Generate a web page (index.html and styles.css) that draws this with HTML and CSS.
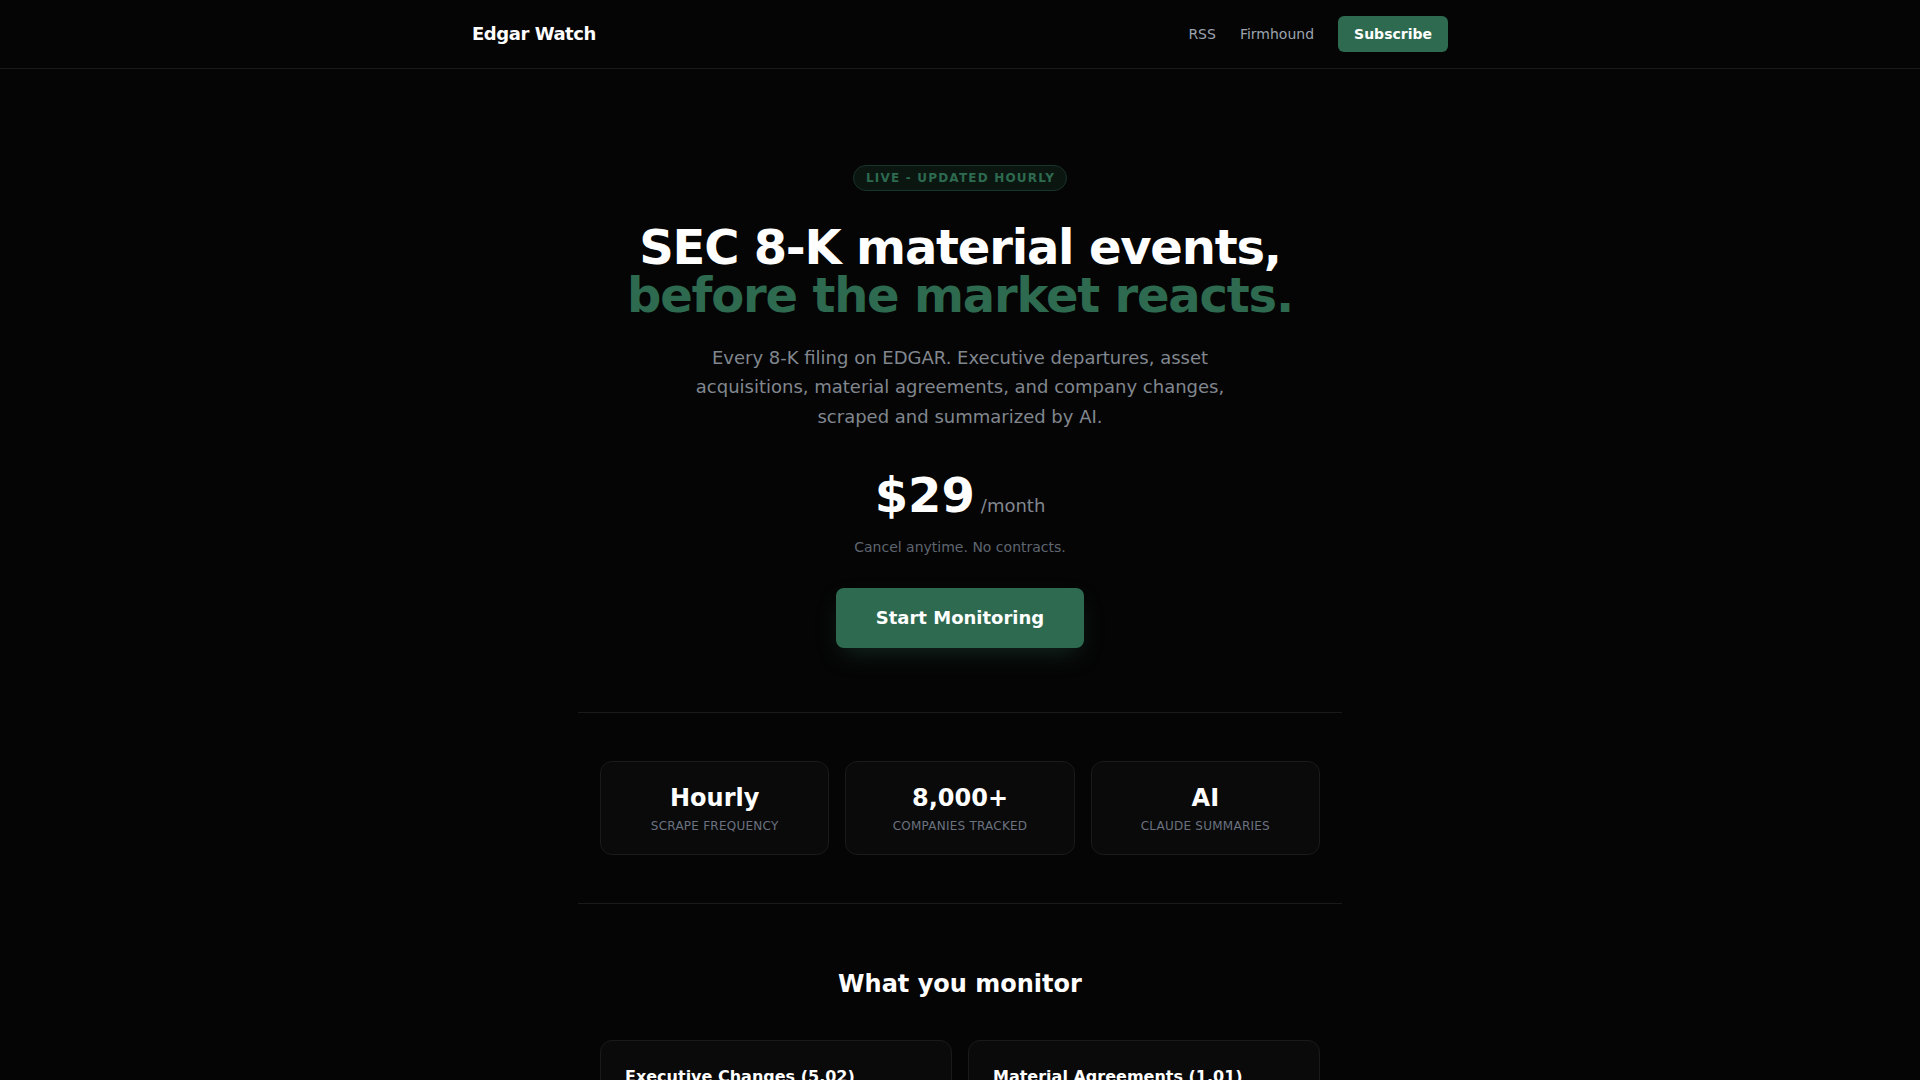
FILE: index.html
```html
<!DOCTYPE html>
<html lang="en">
<head>
<meta charset="utf-8">
<title>Edgar Watch</title>
<link rel="stylesheet" href="styles.css">
</head>
<body>
<header class="site-header">
  <div class="header-inner">
    <a class="brand" href="#">Edgar Watch</a>
    <nav class="nav">
      <a class="nav-link" href="#">RSS</a>
      <a class="nav-link" href="#">Firmhound</a>
      <a class="nav-button" href="#">Subscribe</a>
    </nav>
  </div>
</header>
<main class="container">
  <section class="hero">
    <div class="badge">LIVE - UPDATED HOURLY</div>
    <h1 class="title">SEC 8-K material events,<span class="title-accent">before the market reacts.</span></h1>
    <p class="lead">Every 8-K filing on EDGAR. Executive departures, asset acquisitions, material agreements, and company changes, scraped and summarized by AI.</p>
    <div class="price">
      <span class="price-amount">$29</span>
      <span class="price-period">/month</span>
    </div>
    <p class="price-note">Cancel anytime. No contracts.</p>
    <a class="cta" href="#">Start Monitoring</a>
  </section>
  <section class="stats">
    <div class="stat-card">
      <div class="stat-value">Hourly</div>
      <div class="stat-label">Scrape frequency</div>
    </div>
    <div class="stat-card">
      <div class="stat-value">8,000+</div>
      <div class="stat-label">Companies tracked</div>
    </div>
    <div class="stat-card">
      <div class="stat-value">AI</div>
      <div class="stat-label">Claude summaries</div>
    </div>
  </section>
  <section class="monitor">
    <h2 class="section-title">What you monitor</h2>
    <div class="monitor-grid">
      <div class="monitor-card">
        <h3 class="monitor-title">Executive Changes (5.02)</h3>
        <p class="monitor-text">CEO, CFO and director departures, appointments and compensation changes.</p>
      </div>
      <div class="monitor-card">
        <h3 class="monitor-title">Material Agreements (1.01)</h3>
        <p class="monitor-text">New contracts, credit facilities, partnerships and definitive agreements.</p>
      </div>
      <div class="monitor-card">
        <h3 class="monitor-title">Acquisitions (2.01)</h3>
        <p class="monitor-text">Completed acquisitions and dispositions of significant assets.</p>
      </div>
      <div class="monitor-card">
        <h3 class="monitor-title">Other Events (8.01)</h3>
        <p class="monitor-text">Voluntary disclosures and other events the company deems important.</p>
      </div>
    </div>
  </section>
</main>
</body>
</html>
```

FILE: styles.css
```css
* {
  box-sizing: border-box;
}

html, body {
  margin: 0;
  padding: 0;
}

body {
  background: #050505;
  color: #ffffff;
  font-family: "DejaVu Sans", "Noto Sans", sans-serif;
}

a {
  text-decoration: none;
}

.site-header {
  border-bottom: 1px solid #1a1a1a;
}

.header-inner {
  max-width: 1024px;
  margin: 0 auto;
  padding: 16px 24px;
  display: flex;
  align-items: center;
  justify-content: space-between;
}

.brand {
  color: #ffffff;
  font-size: 18px;
  line-height: 28px;
  font-weight: 700;
  letter-spacing: -0.025em;
}

.nav {
  display: flex;
  align-items: center;
  gap: 24px;
}

.nav-link {
  color: #9ca3af;
  font-size: 14px;
  line-height: 20px;
}

.nav-button {
  background: #2d6a4f;
  color: #ffffff;
  font-size: 14px;
  line-height: 20px;
  font-weight: 700;
  padding: 8px 16px;
  border-radius: 6px;
}

.container {
  max-width: 764px;
  margin: 0 auto;
}

.hero {
  padding: 96px 22px 64px;
  text-align: center;
}

.badge {
  display: inline-block;
  font-size: 12px;
  line-height: 16px;
  font-weight: 700;
  letter-spacing: 1.2px;
  color: #2d6a4f;
  background: #0b1611;
  border: 1px solid #19342a;
  border-radius: 9999px;
  padding: 4px 11px 4px 12px;
  margin-bottom: 32px;
}

.title {
  margin: 0;
  font-size: 48px;
  line-height: 48px;
  font-weight: 700;
  letter-spacing: -0.025em;
  color: #ffffff;
}

.title-accent {
  display: block;
  color: #2d6a4f;
}

.lead {
  max-width: 576px;
  margin: 24px auto 0;
  font-size: 18px;
  line-height: 1.625;
  color: #81878f;
}

.price {
  margin-top: 40px;
  display: flex;
  justify-content: center;
  align-items: baseline;
  gap: 6px;
}

.price-amount {
  font-size: 48px;
  line-height: 48px;
  font-weight: 700;
  color: #ffffff;
}

.price-period {
  font-size: 18px;
  color: #81878f;
}

.price-note {
  margin: 18px 0 0;
  font-size: 14px;
  line-height: 20px;
  color: #5f6570;
}

.cta {
  display: inline-block;
  margin-top: 31px;
  padding: 18px 40px;
  font-size: 18px;
  line-height: 24px;
  font-weight: 700;
  color: #ffffff;
  background: #2d6a4f;
  border-radius: 8px;
  box-shadow: 0 10px 24px -6px rgba(45, 106, 79, 0.35);
}

.stats {
  border-top: 1px solid #1a1a1a;
  padding: 48px 22px;
  display: grid;
  grid-template-columns: repeat(3, 1fr);
  gap: 16px;
}

.stat-card {
  background: #0a0a0a;
  border: 1px solid #1a1a1a;
  border-radius: 12px;
  padding: 20px 16px;
  text-align: center;
}

.stat-value {
  font-size: 24px;
  line-height: 32px;
  font-weight: 700;
  color: #ffffff;
}

.stat-label {
  margin-top: 4px;
  font-size: 12px;
  line-height: 16px;
  text-transform: uppercase;
  letter-spacing: 0.02em;
  color: #6b7280;
}

.monitor {
  border-top: 1px solid #1a1a1a;
  padding: 64px 22px;
}

.section-title {
  margin: 0 0 40px;
  font-size: 24px;
  line-height: 32px;
  font-weight: 700;
  text-align: center;
  color: #ffffff;
}

.monitor-grid {
  display: grid;
  grid-template-columns: repeat(2, 1fr);
  gap: 16px;
}

.monitor-card {
  background: #0a0a0a;
  border: 1px solid #1a1a1a;
  border-radius: 12px;
  padding: 24px;
}

.monitor-title {
  margin: 0;
  font-size: 16px;
  line-height: 24px;
  font-weight: 700;
  color: #ffffff;
}

.monitor-text {
  margin: 8px 0 0;
  font-size: 14px;
  line-height: 1.6;
  color: #81878f;
}
```
